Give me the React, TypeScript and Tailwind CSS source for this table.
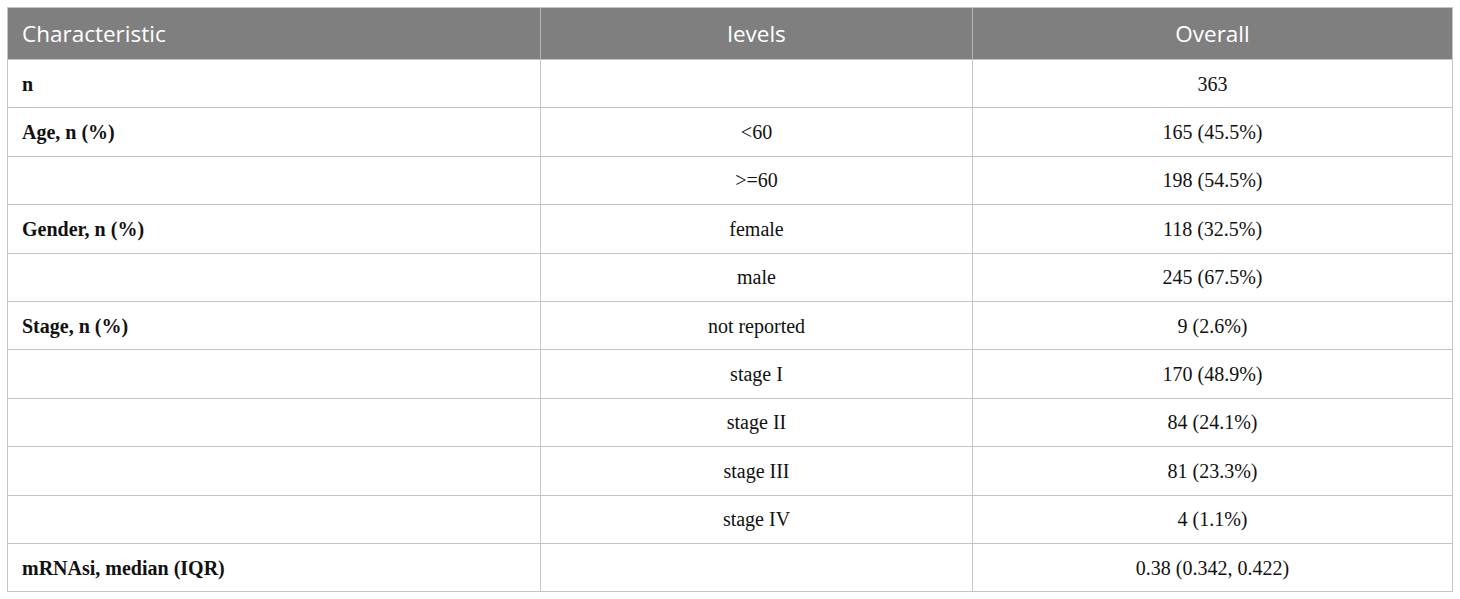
const rows: { label: string; level: string; overall: string }[] = [
  { label: "n", level: "", overall: "363" },
  { label: "Age, n (%)", level: "<60", overall: "165 (45.5%)" },
  { label: "", level: ">=60", overall: "198 (54.5%)" },
  { label: "Gender, n (%)", level: "female", overall: "118 (32.5%)" },
  { label: "", level: "male", overall: "245 (67.5%)" },
  { label: "Stage, n (%)", level: "not reported", overall: "9 (2.6%)" },
  { label: "", level: "stage I", overall: "170 (48.9%)" },
  { label: "", level: "stage II", overall: "84 (24.1%)" },
  { label: "", level: "stage III", overall: "81 (23.3%)" },
  { label: "", level: "stage IV", overall: "4 (1.1%)" },
  { label: "mRNAsi, median (IQR)", level: "", overall: "0.38 (0.342, 0.422)" },
];

export default function App() {
  return (
    <div className="min-h-[599px] w-[1460px] bg-white pl-[7px] pt-[7px]">
      <div className="w-[1446px] border border-[#c4c4c4]">
        <div className="grid h-[51px] grid-cols-[532px_432px_1fr] bg-[#7f7f7f] font-['Open_Sans',sans-serif] text-[22.5px] text-white">
          <div className="flex items-center pl-[14px]">Characteristic</div>
          <div className="flex items-center justify-center border-l border-[#b4b4b4]">levels</div>
          <div className="flex items-center justify-center border-l border-[#b4b4b4]">Overall</div>
        </div>
        {rows.map((r, i) => (
          <div
            key={i}
            className="grid h-[48.4px] grid-cols-[532px_432px_1fr] border-t border-[#c4c4c4] font-['Liberation_Serif',serif] text-[20px] text-[#111]"
          >
            <div className="flex items-center pl-[14px] font-bold">{r.label}</div>
            <div className="flex items-center justify-center border-l border-[#c4c4c4]">{r.level}</div>
            <div className="flex items-center justify-center border-l border-[#c4c4c4]">{r.overall}</div>
          </div>
        ))}
      </div>
    </div>
  );
}
